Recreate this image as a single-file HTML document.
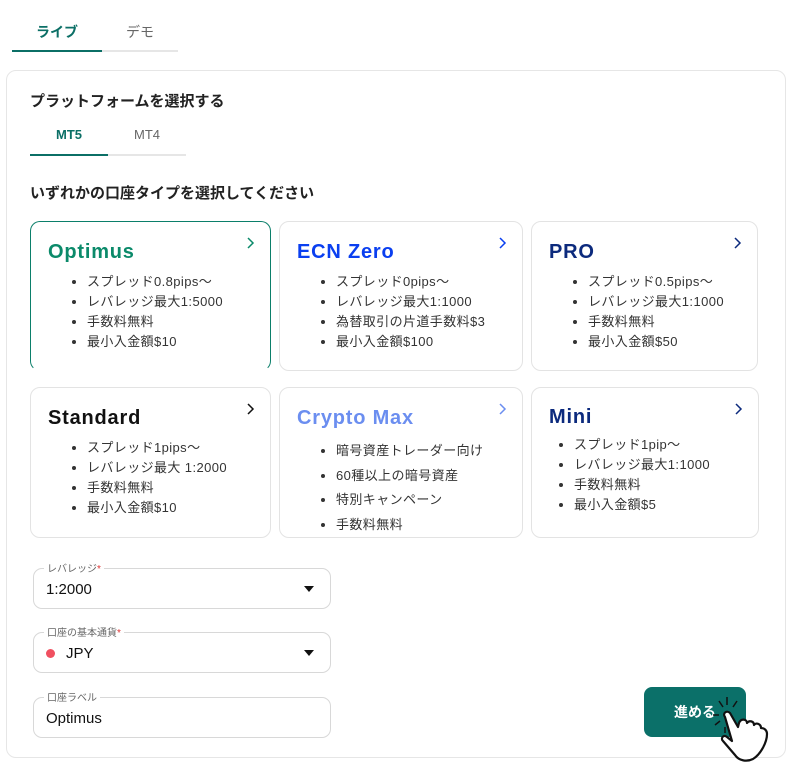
<!DOCTYPE html>
<html><head><meta charset="utf-8"><style>
*{box-sizing:border-box;margin:0;padding:0}
body{width:790px;height:763px;background:#fff;font-family:"Liberation Sans","Noto Sans CJK JP",sans-serif;color:#222;position:relative;overflow:hidden}
.abs{position:absolute}
.tab{position:absolute;text-align:center;font-size:14px}
.card{position:absolute;border:1px solid #e3e3e3;border-radius:10px;background:#fff}
.card h3{position:absolute;left:17px;top:19px;font-size:20px;font-weight:bold;letter-spacing:0.8px}
.card ul{position:absolute;left:56px;top:50px;font-size:13px;line-height:20px;color:#333;letter-spacing:0.4px}
.card .chev{position:absolute;right:14px;top:14px}
.field{position:absolute;left:33px;width:298px;height:41px;border:1px solid #d8d8d8;border-radius:9px}
.field label{position:absolute;left:10px;top:-9px;background:#fff;padding:0 3px;font-size:10px;color:#666}
.field .v{position:absolute;left:12px;top:12px;font-size:15px;color:#111}
.tri{position:absolute;right:16px;top:17px;width:0;height:0;border-left:5px solid transparent;border-right:5px solid transparent;border-top:6px solid #111}
</style></head><body>
<div class="tab" style="left:12px;top:22px;width:90px;color:#0b6f66;font-weight:bold">ライブ</div>
<div class="tab" style="left:102px;top:22px;width:76px;color:#666">デモ</div>
<div class="abs" style="left:12px;top:50px;width:166px;height:2px;background:#e6e6e6"></div>
<div class="abs" style="left:12px;top:50px;width:90px;height:2px;background:#0b6f66"></div>

<div class="abs" style="left:6px;top:70px;width:780px;height:688px;border:1px solid #e6e6e6;border-radius:10px"></div>
<div class="abs" style="left:30px;top:90px;font-size:15px;font-weight:bold">プラットフォームを選択する</div>
<div class="tab" style="left:30px;top:127px;width:78px;color:#0b6f66;font-weight:bold;font-size:13px">MT5</div>
<div class="tab" style="left:108px;top:127px;width:78px;color:#666;font-size:13px">MT4</div>
<div class="abs" style="left:30px;top:154px;width:156px;height:2px;background:#e6e6e6"></div>
<div class="abs" style="left:30px;top:154px;width:78px;height:2px;background:#0b6f66"></div>
<div class="abs" style="left:30px;top:182px;font-size:15px;font-weight:bold">いずれかの口座タイプを選択してください</div>

<div class="card" style="left:30px;top:221px;width:241px;height:150px;border-color:#0b7f6a;border-bottom-color:transparent"><h3 style="color:#0b8a6a">Optimus</h3><svg class="chev" width="10" height="14"><path d="M2 2l5 5-5 5" stroke="#0b8a6a" stroke-width="1.5" fill="none"/></svg><ul><li>スプレッド0.8pips〜</li><li>レバレッジ最大1:5000</li><li>手数料無料</li><li>最小入金額$10</li></ul></div>
<div class="card" style="left:279px;top:221px;width:244px;height:150px"><h3 style="color:#0a3ff0">ECN Zero</h3><svg class="chev" width="10" height="14"><path d="M2 2l5 5-5 5" stroke="#0a3ff0" stroke-width="1.5" fill="none"/></svg><ul><li>スプレッド0pips〜</li><li>レバレッジ最大1:1000</li><li>為替取引の片道手数料$3</li><li>最小入金額$100</li></ul></div>
<div class="card" style="left:531px;top:221px;width:227px;height:150px"><h3 style="color:#0c2a7d">PRO</h3><svg class="chev" width="10" height="14"><path d="M2 2l5 5-5 5" stroke="#0c2a7d" stroke-width="1.5" fill="none"/></svg><ul><li>スプレッド0.5pips〜</li><li>レバレッジ最大1:1000</li><li>手数料無料</li><li>最小入金額$50</li></ul></div>

<div class="card" style="left:30px;top:387px;width:241px;height:151px"><h3 style="color:#111">Standard</h3><svg class="chev" width="10" height="14"><path d="M2 2l5 5-5 5" stroke="#111" stroke-width="1.5" fill="none"/></svg><ul><li>スプレッド1pips〜</li><li>レバレッジ最大 1:2000</li><li>手数料無料</li><li>最小入金額$10</li></ul></div>
<div class="card" style="left:279px;top:387px;width:244px;height:151px"><h3 style="color:#6b8ef0">Crypto Max</h3><svg class="chev" width="10" height="14"><path d="M2 2l5 5-5 5" stroke="#6b8ef0" stroke-width="1.5" fill="none"/></svg><ul style="line-height:24.5px;top:51px"><li>暗号資産トレーダー向け</li><li>60種以上の暗号資産</li><li>特別キャンペーン</li><li>手数料無料</li></ul></div>
<div class="card" style="left:531px;top:387px;width:228px;height:151px"><h3 style="color:#0c2a7d;top:18px">Mini</h3><svg class="chev" width="10" height="14"><path d="M2 2l5 5-5 5" stroke="#0c2a7d" stroke-width="1.5" fill="none"/></svg><ul style="left:42px;top:47px"><li>スプレッド1pip〜</li><li>レバレッジ最大1:1000</li><li>手数料無料</li><li>最小入金額$5</li></ul></div>

<div class="field" style="top:568px"><label>レバレッジ<span style="color:#d33">*</span></label><div class="v">1:2000</div><div class="tri"></div></div>
<div class="field" style="top:632px"><label>口座の基本通貨<span style="color:#d33">*</span></label><div class="abs" style="left:12px;top:16px;width:9px;height:9px;border-radius:50%;background:#f05060"></div><div class="v" style="left:32px">JPY</div><div class="tri"></div></div>
<div class="field" style="top:697px"><label>口座ラベル</label><div class="v">Optimus</div></div>

<div class="abs" style="left:644px;top:687px;width:102px;height:50px;border-radius:8px;background:#0b7069;color:#fff;font-weight:bold;font-size:14px;line-height:50px;padding-left:30px">進める</div>
<svg class="abs" style="left:705px;top:695px" width="80" height="68" viewBox="0 0 80 68">
<g stroke="#111" stroke-width="1.5"><path d="M22 2v8M32 6l-4 6M14 6l4 6M8 20h6M10 30l5-4M20 32v6"/></g>
<path d="M20 22c-3-4 2-7 5-4l8 14 1-4c2-5 8-4 8 0 2-3 7-2 7 2 2-3 7-1 7 3 3 0 6 2 6 6 0 8-6 20-14 25-6 3-14 2-18-4l-12-14c-3-3 1-7 4-4l5 4z" fill="#fff" stroke="#111" stroke-width="2.2" stroke-linejoin="round"/>
</svg>
</body></html>
